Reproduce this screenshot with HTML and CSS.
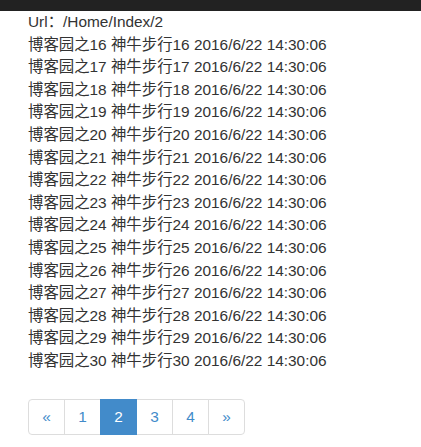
FILE: index.html
```html
<!DOCTYPE html>
<html lang="zh">
<head>
<meta charset="utf-8">
<title>Index</title>
<link rel="stylesheet" href="styles.css">
</head>
<body>
<div class="navbar"></div>
<div class="container">
  <div class="row">Url：/Home/Index/2</div>
  <div class="row">博客园之16 神牛步行16 2016/6/22 14:30:06</div>
  <div class="row">博客园之17 神牛步行17 2016/6/22 14:30:06</div>
  <div class="row">博客园之18 神牛步行18 2016/6/22 14:30:06</div>
  <div class="row">博客园之19 神牛步行19 2016/6/22 14:30:06</div>
  <div class="row">博客园之20 神牛步行20 2016/6/22 14:30:06</div>
  <div class="row">博客园之21 神牛步行21 2016/6/22 14:30:06</div>
  <div class="row">博客园之22 神牛步行22 2016/6/22 14:30:06</div>
  <div class="row">博客园之23 神牛步行23 2016/6/22 14:30:06</div>
  <div class="row">博客园之24 神牛步行24 2016/6/22 14:30:06</div>
  <div class="row">博客园之25 神牛步行25 2016/6/22 14:30:06</div>
  <div class="row">博客园之26 神牛步行26 2016/6/22 14:30:06</div>
  <div class="row">博客园之27 神牛步行27 2016/6/22 14:30:06</div>
  <div class="row">博客园之28 神牛步行28 2016/6/22 14:30:06</div>
  <div class="row">博客园之29 神牛步行29 2016/6/22 14:30:06</div>
  <div class="row">博客园之30 神牛步行30 2016/6/22 14:30:06</div>
  <ul class="pagination">
    <li><a class="page first" href="#">«</a></li>
    <li><a class="page" href="#">1</a></li>
    <li><a class="page active" href="#">2</a></li>
    <li><a class="page" href="#">3</a></li>
    <li><a class="page" href="#">4</a></li>
    <li><a class="page last" href="#">»</a></li>
  </ul>
</div>
</body>
</html>
```

FILE: styles.css
```css
html, body {
  margin: 0;
  padding: 0;
  background: #fff;
}
body {
  font-family: "Liberation Sans", Arial, "Noto Sans CJK SC", sans-serif;
  font-size: 15.4px;
  color: #333;
}
.navbar {
  height: 11px;
  background: #222;
}
.container {
  padding-left: 28px;
}
.row {
  height: 22.6px;
  line-height: 22.6px;
  white-space: nowrap;
}
.pagination {
  display: flex;
  list-style: none;
  margin: 26.4px 0 0 0;
  padding: 0;
}
.page {
  box-sizing: border-box;
  display: flex;
  align-items: center;
  justify-content: center;
  width: 37px;
  height: 36px;
  margin-left: -1px;
  border: 1px solid #ddd;
  background: #fff;
  color: #428bca;
  text-decoration: none;
  font-size: 15.4px;
}
.first {
  margin-left: 0;
  border-radius: 4px 0 0 4px;
}
.last {
  border-radius: 0 4px 4px 0;
}
.active {
  position: relative;
  background: #428bca;
  border-color: #428bca;
  color: #fff;
}
```
